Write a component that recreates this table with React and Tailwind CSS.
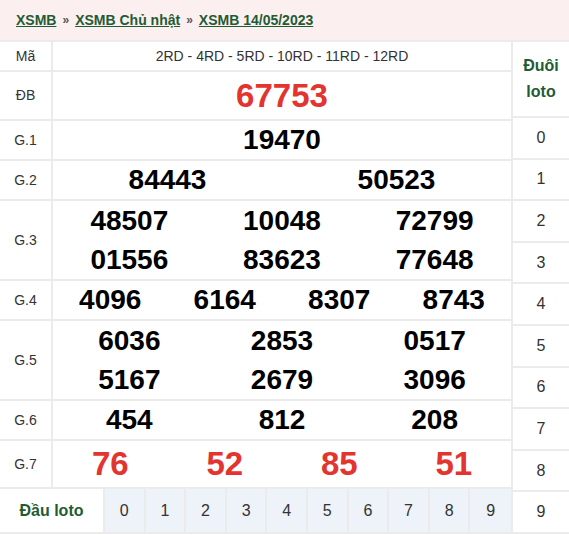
const font = { fontFamily: '"Liberation Sans", Arial, sans-serif' };

const rows = [
  { label: 'Mã', h: 'h-[30px]', type: 'code', values: ['2RD - 4RD - 5RD - 10RD - 11RD - 12RD'] },
  { label: 'ĐB', h: 'h-[49px]', type: 'db', values: ['67753'] },
  { label: 'G.1', h: 'h-[40px]', cols: 1, values: ['19470'] },
  { label: 'G.2', h: 'h-[40px]', cols: 2, values: ['84443', '50523'] },
  { label: 'G.3', h: 'h-[80px]', cols: 3, values: ['48507', '10048', '72799', '01556', '83623', '77648'] },
  { label: 'G.4', h: 'h-[40px]', cols: 4, values: ['4096', '6164', '8307', '8743'] },
  { label: 'G.5', h: 'h-[80px]', cols: 3, values: ['6036', '2853', '0517', '5167', '2679', '3096'] },
  { label: 'G.6', h: 'h-[40px]', cols: 3, values: ['454', '812', '208'] },
  { label: 'G.7', h: 'h-[48px]', cols: 4, red: true, values: ['76', '52', '85', '51'] },
];

const colClass = {
  1: 'grid-cols-1',
  2: 'grid-cols-2',
  3: 'grid-cols-3',
  4: 'grid-cols-4',
};

function PrizeRow({ row }) {
  return (
    <div className={`flex border-b-2 border-[#ebebeb] ${row.h}`}>
      <div className="w-[53px] shrink-0 border-r-2 border-[#ebebeb] flex items-center justify-center text-[14px] text-[#333]">
        {row.label}
      </div>
      {row.type === 'code' && (
        <div className="flex-1 flex items-center justify-center text-[14px] text-[#333]">{row.values[0]}</div>
      )}
      {row.type === 'db' && (
        <div className="flex-1 flex items-center justify-center text-[33px] font-bold text-[#e3342f]">{row.values[0]}</div>
      )}
      {row.cols && (
        <div className={`flex-1 grid ${colClass[row.cols]} content-center`}>
          {row.values.map((v, i) => (
            <div
              key={i}
              className={`flex items-center justify-center font-bold ${
                row.red ? 'text-[33px] text-[#e3342f] h-[46px]' : 'text-[28px] text-black h-[39px]'
              }`}
            >
              {v}
            </div>
          ))}
        </div>
      )}
    </div>
  );
}

export default function App() {
  const digits = [0, 1, 2, 3, 4, 5, 6, 7, 8, 9];
  return (
    <div className="w-[569px] h-[535px] bg-white" style={font}>
      {/* Breadcrumb */}
      <div className="h-[40px] bg-[#fcefef] flex items-center px-4 gap-[6px] text-[14px] font-bold text-[#1f5c34]">
        <a className="underline">XSMB</a>
        <span className="text-[#555] text-[12px]">»</span>
        <a className="underline">XSMB Chủ nhật</a>
        <span className="text-[#555] text-[12px]">»</span>
        <a className="underline">XSMB 14/05/2023</a>
      </div>

      <div className="flex border-t-2 border-[#ebebeb]">
        {/* Results */}
        <div className="w-[513px] border-r-2 border-[#ebebeb]">
          {rows.map((r) => (
            <PrizeRow key={r.label} row={r} />
          ))}
          <div className="flex h-[45px] border-b-2 border-[#ebebeb]">
            <div className="w-[105px] shrink-0 border-r-2 border-[#ebebeb] flex items-center justify-center text-[16px] font-bold text-[#1f5c34]">
              Đầu loto
            </div>
            <div className="flex-1 grid grid-cols-10">
              {digits.map((d) => (
                <div
                  key={d}
                  className="bg-[#eef2f9] border-r-2 border-[#ebebeb] last:border-r-0 flex items-center justify-center text-[16px] text-[#333]"
                >
                  {d}
                </div>
              ))}
            </div>
          </div>
        </div>

        {/* Đuôi loto */}
        <div className="flex-1 flex flex-col h-[492px]">
          <div className="h-[76px] shrink-0 border-b-2 border-[#ebebeb] flex items-center justify-center text-center text-[16px] font-bold leading-[26px] text-[#1f5c34]">
            Đuôi
            <br />
            loto
          </div>
          {digits.map((d) => (
            <div key={d} className="flex-1 border-b-2 border-[#ebebeb] flex items-center justify-center text-[16px] text-[#333]">
              {d}
            </div>
          ))}
        </div>
      </div>
    </div>
  );
}
